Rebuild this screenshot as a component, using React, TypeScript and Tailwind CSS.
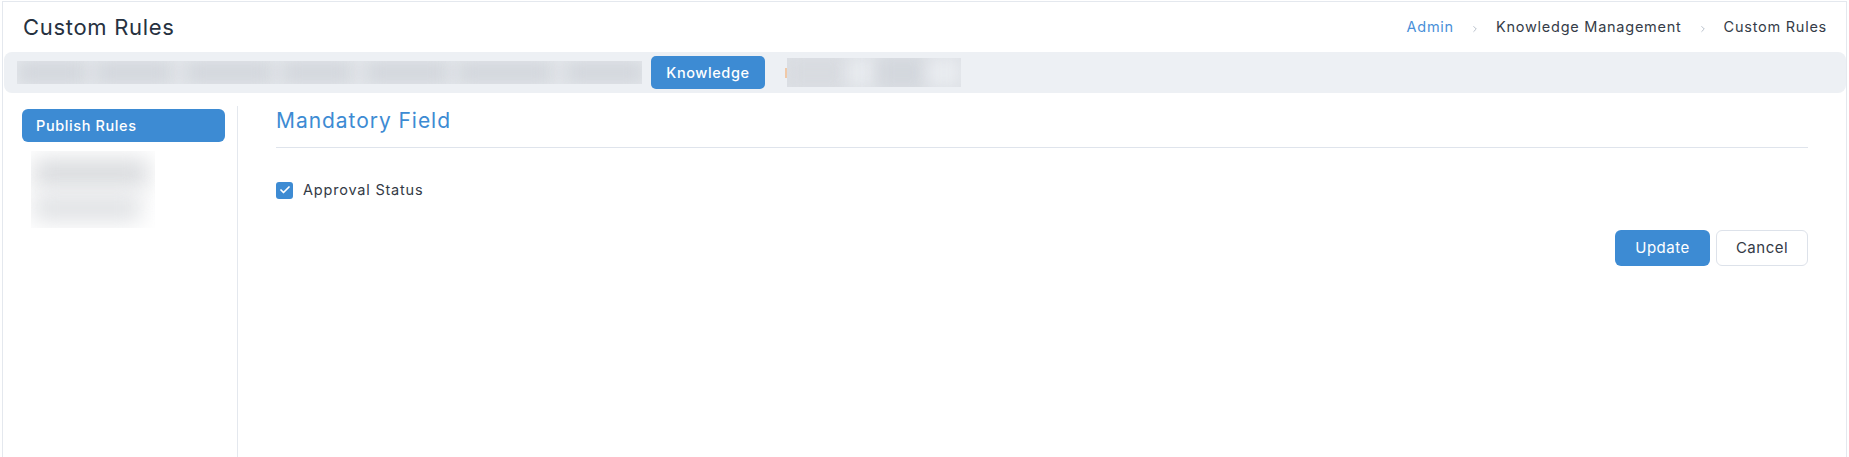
import { Check, ChevronRight } from "lucide-react";

const crumbs = [
  { label: "Admin", active: true },
  { label: "Knowledge Management", active: false },
  { label: "Custom Rules", active: false },
];

// widths of the blurred (hidden) tabs in the top bar
const hiddenTabs = [70, 78, 88, 72, 84, 96, 80];

function BlurredStrip() {
  return (
    <div className="flex h-[23px] w-[625px] overflow-hidden bg-[#e6e9ed]">
      {hiddenTabs.map((w, i) => (
        <div
          key={i}
          className="h-full shrink-0 bg-[#d1d5db] blur-[9px]"
          style={{ width: w, marginRight: i % 2 ? 12 : 8 }}
        />
      ))}
    </div>
  );
}

export default function App() {
  return (
    <div className="h-[457px] w-full overflow-hidden bg-white px-[2px] pt-[1px] font-['Inter',sans-serif] text-[#2f3744]">
      <div className="flex h-[470px] flex-col border border-[#e4e8ee]">
        <header className="flex h-[50px] items-center justify-between pl-[20px] pr-[19px]">
          <h1 className="text-[22px] font-normal tracking-[0.7px] text-[#263140]">
            Custom Rules
          </h1>
          <nav className="flex items-center text-[14.5px] tracking-[0.75px]">
            {crumbs.map((c, i) => (
              <div key={c.label} className="flex items-center">
                {i > 0 && (
                  <ChevronRight
                    className="mx-[16px] translate-y-[2px] text-[#aab3c0]"
                    size={10}
                    strokeWidth={2}
                  />
                )}
                <span className={c.active ? "text-[#4a90d9]" : "text-[#353c48]"}>
                  {c.label}
                </span>
              </div>
            ))}
          </nav>
        </header>

        <div className="ml-[1px] flex h-[41px] items-center rounded-lg bg-[#edf0f4] pl-[13px]">
          <BlurredStrip />
          <button className="ml-[9px] h-[33px] w-[114px] rounded-[5px] bg-[#3d8bd3] text-[14.5px] font-medium tracking-[0.6px] text-white">
            Knowledge
          </button>
          <div className="ml-[20px] h-[10px] w-[2px] bg-[#f0c9a8]" />
          <div className="flex h-[29px] w-[174px] overflow-hidden bg-[#dde0e5]">
            <div className="h-full w-[60px] bg-[#d8dbe0] blur-[8px]" />
            <div className="h-full w-[30px] bg-[#e8ebef] blur-[8px]" />
            <div className="h-full w-[50px] bg-[#d3d7dd] blur-[8px]" />
            <div className="h-full w-[34px] bg-[#e9ecf0] blur-[8px]" />
          </div>
        </div>

        <div className="mt-[13px] flex flex-1">
          <aside className="w-[235px] shrink-0 border-r border-[#e4e8ee] pl-[19px] pr-[12px] pt-[3px]">
            <button className="flex h-[33px] w-full items-center rounded-[6px] bg-[#3d8bd3] pl-[14px] text-[14.5px] font-medium tracking-[0.6px] text-white">
              Publish Rules
            </button>
            <div className="ml-[9px] mt-[9px] flex h-[77px] w-[124px] flex-col justify-center gap-[8px] overflow-hidden bg-white px-[2px]">
              <div className="h-[28px] w-[116px] rounded bg-[#d8dadd] blur-[11px]" />
              <div className="h-[26px] w-[108px] rounded bg-[#dee0e3] blur-[11px]" />
            </div>
          </aside>

          <main className="flex-1 pl-[38px] pr-[38px] pt-[1px]">
            <div className="border-b border-[#dfe4ec] pb-[12px]">
              <h2 className="text-[21px] leading-[28px] tracking-[0.95px] text-[#3d8bd3]">
                Mandatory Field
              </h2>
            </div>

            <label className="mt-[30px] flex h-[24px] items-center gap-[10px] text-[14.5px] tracking-[0.8px] text-[#333a46]">
              <span className="flex h-[17px] w-[17px] items-center justify-center rounded-[3px] bg-[#3d8bd3]">
                <Check size={12} strokeWidth={3.5} className="text-white" />
              </span>
              Approval Status
            </label>

            <div className="mt-[28px] flex justify-end gap-[6px]">
              <button className="h-[36px] w-[95px] rounded-[6px] bg-[#3d8bd3] text-[15px] tracking-[0.5px] text-white">
                Update
              </button>
              <button className="h-[36px] w-[92px] rounded-[6px] border border-[#dde2ea] bg-white text-[15px] tracking-[0.5px] text-[#333a46]">
                Cancel
              </button>
            </div>
          </main>
        </div>
      </div>
    </div>
  );
}
